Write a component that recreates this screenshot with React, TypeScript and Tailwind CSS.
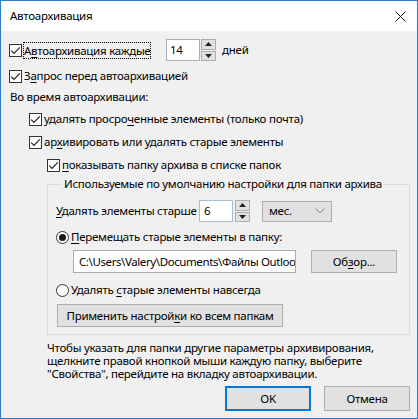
import React from "react";

function Check() {
  return (
    <span className="w-[13px] h-[13px] border border-[#333333] bg-white flex items-center justify-center shrink-0">
      <svg width="11" height="11" viewBox="0 0 11 11">
        <path d="M1.2 5.6 L4 8.4 L9.8 2.4" fill="none" stroke="#1a1a1a" strokeWidth="1.1" />
      </svg>
    </span>
  );
}

function Radio({ on }: { on?: boolean }) {
  return (
    <span className="w-[13px] h-[13px] rounded-full border border-[#333333] bg-white flex items-center justify-center shrink-0">
      {on ? <span className="w-[7px] h-[7px] rounded-full bg-[#1a1a1a]" /> : null}
    </span>
  );
}

function Spin() {
  return (
    <div className="flex flex-col gap-[1px] w-[15px] h-[22px]">
      <div className="flex-1 bg-[#e1e1e1] border border-[#adadad] flex items-center justify-center">
        <svg width="7" height="4" viewBox="0 0 7 4">
          <path d="M0 4 L3.5 0 L7 4 Z" fill="#222" />
        </svg>
      </div>
      <div className="flex-1 bg-[#e1e1e1] border border-[#adadad] flex items-center justify-center">
        <svg width="7" height="4" viewBox="0 0 7 4">
          <path d="M0 0 L3.5 4 L7 0 Z" fill="#222" />
        </svg>
      </div>
    </div>
  );
}

function U({ children }: { children: React.ReactNode }) {
  return <span className="underline underline-offset-[2px] decoration-[1px]">{children}</span>;
}

export default function App() {
  return (
    <div className="w-[418px] h-[419px] border border-[#2b7bcb] bg-[#f0f0f0] flex flex-col text-[11.5px] tracking-[-0.25px] leading-[16px] text-black font-['Noto_Sans',sans-serif] overflow-hidden whitespace-nowrap">
      <div className="h-[30px] bg-white flex items-center justify-between pl-[9px] pr-[11px] shrink-0">
        <span>Автоархивация</span>
        <svg width="11" height="11" viewBox="0 0 11 11">
          <path d="M0.5 0.5 L10.5 10.5 M10.5 0.5 L0.5 10.5" stroke="#111" strokeWidth="1" />
        </svg>
      </div>
      <div className="pl-[8px] pr-[7px] flex flex-col">
        <div className="mt-[8px] h-[22px] flex items-center">
          <div className="w-[157px] flex items-center">
            <Check />
            <span className="ml-[1px] border border-dotted border-black leading-[15px]">
              А<U>в</U>тоархивация каждые
            </span>
          </div>
          <div className="w-[34px] h-[22px] bg-white border border-[#abadb3] pl-[3px] flex items-center">14</div>
          <div className="ml-[1px]">
            <Spin />
          </div>
          <span className="ml-[6px]">дней</span>
        </div>
        <div className="mt-[7px] h-[16px] flex items-center">
          <Check />
          <span className="ml-[2px]">
            З<U>а</U>прос перед автоархивацией
          </span>
        </div>
        <div className="mt-[5px] h-[16px] flex items-center pl-[1px]">Во время автоархивации:</div>
        <div className="mt-[6px] h-[16px] flex items-center ml-[20px]">
          <Check />
          <span className="ml-[2px]">
            удалять просро<U>ч</U>енные элементы (только почта)
          </span>
        </div>
        <div className="mt-[7px] h-[16px] flex items-center ml-[20px]">
          <Check />
          <span className="ml-[2px]">
            ар<U>х</U>ивировать или удалять старые элементы
          </span>
        </div>
        <div className="mt-[7px] h-[16px] flex items-center ml-[38px]">
          <Check />
          <span className="ml-[2px]">
            <U>п</U>оказывать папку архива в списке папок
          </span>
        </div>
        <fieldset className="mt-[3px] ml-[38px] w-[363px] border border-[#dcdcdc] pl-[8px] pb-[7px]">
          <legend className="ml-[6px] px-[2px] leading-[16px]">
            Используемые по умолчанию настройки для папки архива
          </legend>
          <div className="mt-[8px] h-[22px] flex items-center">
            <span className="w-[143px]">
              <U>У</U>далять элементы старше
            </span>
            <div className="w-[34px] h-[22px] bg-white border border-[#a8bcd4] pl-[4px] flex items-center">6</div>
            <div className="ml-[2px]">
              <Spin />
            </div>
            <div className="ml-[12px] w-[70px] h-[21px] bg-[#e1e1e1] border border-[#adadad] flex items-center justify-between pl-[6px] pr-[6px]">
              <span>мес.</span>
              <svg width="10" height="6" viewBox="0 0 10 6">
                <path d="M0.5 0.5 L5 5 L9.5 0.5" fill="none" stroke="#888" strokeWidth="1" />
              </svg>
            </div>
          </div>
          <div className="mt-[7px] h-[16px] flex items-center">
            <Radio on />
            <span className="ml-[2px]">
              <U>П</U>еремещать старые элементы в папку:
            </span>
          </div>
          <div className="mt-[5px] h-[23px] flex items-center">
            <div className="ml-[17px] w-[223px] h-[23px] bg-white border border-[#abadb3] pl-[5px] flex items-center overflow-hidden tracking-[-0.4px]">
              C:\Users\Valery\Documents\Файлы Outlook
            </div>
            <div className="ml-[15px] w-[86px] h-[23px] bg-[#e1e1e1] border border-[#adadad] flex items-center justify-center">
              <span>
                Об<U>з</U>ор...
              </span>
            </div>
          </div>
          <div className="mt-[9px] h-[16px] flex items-center">
            <Radio />
            <span className="ml-[2px]">
              Удалять <U>с</U>тарые элементы навсегда
            </span>
          </div>
          <div className="mt-[6px] ml-[1px] w-[226px] h-[23px] bg-[#e1e1e1] border border-[#adadad] flex items-center justify-center">
            <span>
              Применить настрой<U>к</U>и ко всем папкам
            </span>
          </div>
        </fieldset>
        <p className="mt-[6px] ml-[38px] leading-[13px]">
          Чтобы указать для папки другие параметры архивирования,
          <br />
          щелкните правой кнопкой мыши каждую папку, выберите
          <br />
          "Свойства", перейдите на вкладку автоархивации.
        </p>
        <div className="mt-[6px] flex justify-end gap-[13px]">
          <div className="w-[86px] h-[25px] bg-[#e1e1e1] border-2 border-[#0078d7] flex items-center justify-center">
            OK
          </div>
          <div className="w-[86px] h-[25px] bg-[#e1e1e1] border border-[#adadad] flex items-center justify-center">
            Отмена
          </div>
        </div>
      </div>
    </div>
  );
}
